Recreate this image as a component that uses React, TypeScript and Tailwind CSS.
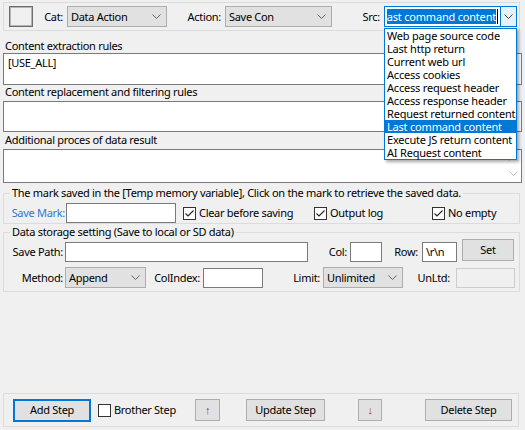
import React from "react"

const sources = [
  "Web page source code",
  "Last http return",
  "Current web url",
  "Access cookies",
  "Access request header",
  "Access response header",
  "Request returned content",
  "Last command content",
  "Execute JS return content",
  "AI Request content",
]

function Chevron({ color = "#606060" }: { color?: string }) {
  return (
    <svg width="9" height="5" viewBox="0 0 9 5" fill="none">
      <path d="M0.5 0.5L4.5 4.5L8.5 0.5" stroke={color} strokeWidth="1" />
    </svg>
  )
}

function Combo({ text, className = "" }: { text: string; className?: string }) {
  return (
    <div className={"h-[21px] border border-[#adadad] bg-[#e1e1e1] flex items-center justify-between pl-[3px] pr-[5px] shrink-0 " + className}>
      <span>{text}</span>
      <Chevron />
    </div>
  )
}

function Label({ text, className = "" }: { text: string; className?: string }) {
  return <div className={"h-[20px] flex items-center justify-end shrink-0 " + className}>{text}</div>
}

function Box({ text = "", className = "" }: { text?: string; className?: string }) {
  return (
    <div className={"h-[20px] border border-[#7a7a7a] bg-white flex items-center pl-[3px] shrink-0 " + className}>
      {text}
    </div>
  )
}

function Check({ checked, label, className = "" }: { checked: boolean; label: string; className?: string }) {
  return (
    <div className={"flex items-center shrink-0 " + className}>
      <div className="w-[13px] h-[13px] border border-[#333333] bg-white flex items-center justify-center">
        {checked && (
          <svg width="11" height="11" viewBox="0 0 11 11" fill="none">
            <path d="M1.5 5.5L4 8L9.5 2.5" stroke="#222222" strokeWidth="1.1" />
          </svg>
        )}
      </div>
      <span className="ml-[3px]">{label}</span>
    </div>
  )
}

function Button({ children, className = "" }: { children: React.ReactNode; className?: string }) {
  return (
    <div className={"h-[22px] border border-[#adadad] bg-[#e1e1e1] flex items-center justify-center shrink-0 " + className}>
      {children}
    </div>
  )
}

export default function App() {
  return (
    <div className="w-[525px] h-[430px] bg-[#f0f0f0] text-[11px] tracking-[-0.3px] leading-[14px] text-black font-['Noto_Sans',sans-serif] whitespace-nowrap flex flex-col px-[3px] pt-[2px] pb-[3px] relative overflow-hidden">
      {/* top bar */}
      <div className="h-[29px] w-[517px] border border-[#dcdcdc] flex items-center shrink-0">
        <div className="ml-[5px] w-[24px] h-[21px] border border-[#6d6d6d] shadow-[inset_0_0_0_1px_#b4b4b4] bg-[#f0f0f0] shrink-0" />
        <Label text="Cat:" className="w-[34px] pr-[4px]" />
        <Combo text="Data Action" className="w-[100px]" />
        <Label text="Action:" className="w-[58px] pr-[4px]" />
        <Combo text="Save Con" className="w-[107px]" />
        <Label text="Src:" className="w-[52px] pr-[4px]" />
        <div className="h-[21px] w-[133px] border border-[#0078d7] bg-white flex items-center shrink-0">
          <div className="ml-[2px] w-[109px] h-[15px] bg-[#0078d7] text-white tracking-[-0.2px] overflow-hidden flex justify-end items-center">
            <span>Last command content</span>
          </div>
          <div className="w-[1px] h-[15px] bg-black ml-[1px]" />
          <div className="flex-1" />
          <div className="w-[16px] h-full border-l border-[#0078d7] bg-[#e5f1fb] flex items-center justify-center">
            <Chevron color="#404040" />
          </div>
        </div>
      </div>

      {/* rule boxes */}
      <div className="h-[22px] flex items-end shrink-0 pl-[2px]">Content extraction rules</div>
      <div className="h-[32px] border border-[#7a7a7a] bg-white pl-[4px] pt-[2px] shrink-0">[USE_ALL]</div>
      <div className="h-[16px] flex items-end pb-[2px] shrink-0 pl-[2px]">Content replacement and filtering rules</div>
      <div className="h-[31px] border border-[#7a7a7a] bg-white shrink-0" />
      <div className="h-[17px] flex items-end pb-[2px] shrink-0 pl-[2px]">Additional proces of data result</div>
      <div className="h-[34px] border border-[#7a7a7a] bg-white flex justify-end shrink-0">
        <div className="w-[16px] h-full flex flex-col items-center justify-between py-[6px]">
          <svg width="9" height="5" viewBox="0 0 9 5" fill="none">
            <path d="M0.5 4.5L4.5 0.5L8.5 4.5" stroke="#c0c0c0" />
          </svg>
          <Chevron color="#c0c0c0" />
        </div>
      </div>

      {/* temp memory group */}
      <fieldset className="mt-[3px] h-[38px] w-[517px] border border-[#dcdcdc] shrink-0">
        <legend className="ml-[6px] px-[2px] leading-[14px]">
          The mark saved in the [Temp memory variable], Click on the mark to retrieve the saved data.
        </legend>
        <div className="flex items-center mt-[3px]">
          <Label text="Save Mark:" className="w-[62px] pr-[1px] text-[#2a7ad5]" />
          <Box className="w-[110px]" />
          <Check checked label="Clear before saving" className="ml-[7px] w-[131px]" />
          <Check checked label="Output log" className="w-[118px]" />
          <Check checked label="No empty" />
        </div>
      </fieldset>

      {/* data storage group */}
      <fieldset className="mt-[1px] h-[67px] w-[517px] border border-[#dcdcdc] shrink-0">
        <legend className="ml-[6px] px-[2px] leading-[14px]">Data storage setting (Save to local or SD data)</legend>
        <div className="flex items-end h-[23px]">
          <Label text="Save Path:" className="w-[61px] pr-[2px]" />
          <Box className="w-[243px]" />
          <Label text="Col:" className="w-[42px] pr-[3px]" />
          <Box className="w-[32px]" />
          <Label text="Row:" className="w-[40px] pr-[4px]" />
          <Box text="\r\n" className="w-[35px]" />
          <Button className="self-start ml-[5px] w-[52px] h-[20px]">Set</Button>
        </div>
        <div className="flex items-center mt-[5px]">
          <Label text="Method:" className="w-[61px] pr-[2px]" />
          <Combo text="Append" className="w-[81px]" />
          <Label text="ColIndex:" className="w-[57px] pr-[3px]" />
          <Box className="w-[60px]" />
          <Label text="Limit:" className="w-[60px] pr-[3px]" />
          <Combo text="Unlimited" className="w-[80px] h-[20px]" />
          <Label text="UnLtd:" className="w-[53px] pr-[6px]" />
          <div className="w-[59px] h-[20px] border border-[#cccccc] bg-[#f0f0f0]" />
        </div>
      </fieldset>

      {/* bottom actions */}
      <div className="mt-auto h-[34px] w-[516px] border border-[#dcdcdc] flex items-center shrink-0">
        <div className="ml-[9px] w-[78px] h-[23px] border-2 border-[#0078d7] bg-[#e1e1e1] flex items-center justify-center shrink-0">
          Add Step
        </div>
        <Check checked={false} label="Brother Step" className="ml-[7px] w-[97px]" />
        <Button className="w-[25px] text-[#a03030]">↑</Button>
        <Button className="ml-[26px] w-[79px]">Update Step</Button>
        <Button className="ml-[33px] w-[24px] text-[#a03030]">↓</Button>
        <Button className="ml-[43px] w-[87px]">Delete Step</Button>
      </div>

      {/* open Src dropdown */}
      <div className="absolute left-[384px] top-[28px] w-[133px] h-[132px] border border-[#0078d7] bg-white tracking-[-0.2px] shadow-[2px_2px_3px_rgba(0,0,0,0.35)] flex flex-col">
        {sources.map((s) => (
          <div
            key={s}
            className={
              "h-[13px] leading-[13px] pl-[2px] " +
              (s === "Last command content" ? "bg-[#0078d7] text-white" : "")
            }
          >
            {s}
          </div>
        ))}
      </div>
    </div>
  )
}
